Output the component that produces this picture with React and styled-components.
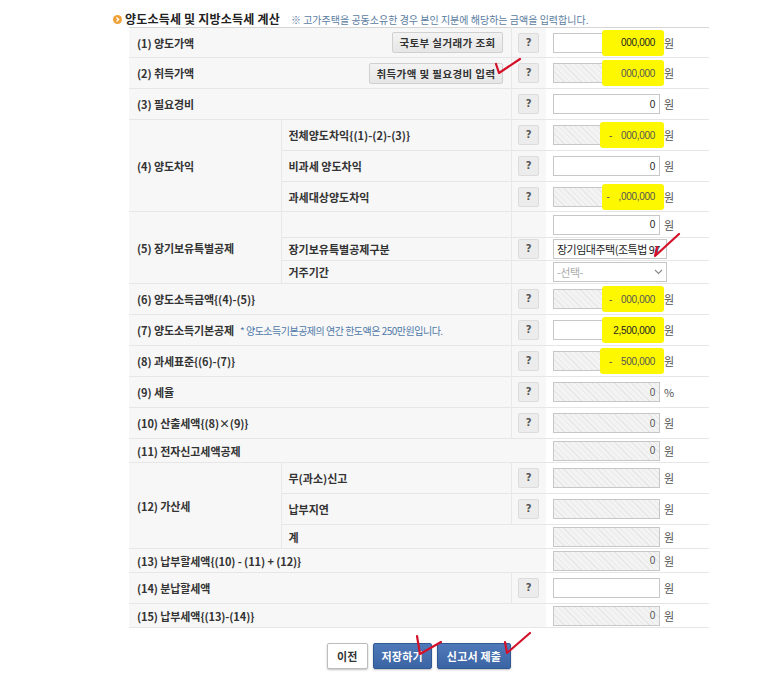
import styled, { createGlobalStyle, css } from "styled-components";

const GlobalStyle = createGlobalStyle`
  body {
    margin: 0;
    background: #fff;
    font-family: "Noto Sans CJK KR", "Noto Sans", sans-serif;
    color: #333;
  }
`;

const Page = styled.div`
  position: relative;
  width: 773px;
  height: 676px;
  padding: 8px 0 0 113px;
  box-sizing: border-box;
`;

const Header = styled.div`
  display: flex;
  align-items: flex-end;
  height: 19px;
  gap: 11px;
`;

const Title = styled.h3`
  margin: 0;
  display: flex;
  align-items: center;
  gap: 3px;
  font-size: 12px;
  font-weight: 700;
  color: #222;
  letter-spacing: 0.2px;
  line-height: 16px;
`;

const Note = styled.span`
  font-size: 10px;
  color: #5a7ca0;
  letter-spacing: 0px;
  line-height: 14px;
`;

const Table = styled.table`
  width: 580px;
  margin-left: 16px;
  border-collapse: collapse;
  table-layout: fixed;
  border-top: 1px solid #d6d6d6;
  border-bottom: 1px solid #c9c9c9;
`;

const Row = styled.tr`
  height: ${(p) => p.$h || 31}px;
  border-bottom: 1px solid #e6e6e6;
`;

const cellBase = css`
  padding: 0;
  font-size: 11px;
  vertical-align: middle;
  text-align: left;
`;

const LabelCell = styled.th`
  ${cellBase};
  background: #f7f7f7;
  padding-left: 8px;
  font-weight: 700;
  color: #333;
  letter-spacing: -0.1px;
`;

const SubCell = styled.th`
  ${cellBase};
  background: #f7f7f7;
  padding-left: 7px;
  font-weight: 700;
  color: #333;
  border-left: 1px solid #e8e8e8;
`;

const HelpCell = styled.td`
  ${cellBase};
  background: #f7f7f7;
  text-align: center;
  border-left: 1px solid #e8e8e8;
`;

const InputCell = styled.td`
  ${cellBase};
  background: #fff;
  padding-left: 7px;
`;

const LabelFlex = styled.div`
  display: flex;
  align-items: center;
  justify-content: space-between;
  padding-right: 8px;
`;

const Hint = styled.span`
  margin-left: 6px;
  font-size: 10px;
  font-weight: 400;
  color: #4f79a8;
  letter-spacing: -0.5px;
`;

const GrayButton = styled.button`
  height: 21px;
  padding: 0 6px;
  border: 1px solid #d0d0d0;
  border-radius: 2px;
  background: linear-gradient(#f3f3f3, #e6e6e6);
  font-family: inherit;
  font-size: 10.5px;
  font-weight: 700;
  color: #333;
  letter-spacing: 0.4px;
`;

const HelpButton = styled.button`
  width: 21px;
  height: 20px;
  padding: 0;
  border: 1px solid #dcdcdc;
  border-radius: 2px;
  background: #ececec;
  font-family: "DejaVu Sans", sans-serif;
  font-size: 10px;
  font-weight: 700;
  color: #555;
  line-height: 18px;
`;

const FieldWrap = styled.div`
  display: flex;
  align-items: center;
  gap: 4px;
`;

const Field = styled.div`
  position: relative;
  width: 107px;
  height: 20px;
  box-sizing: border-box;
  border: 1px solid #c7c7c7;
  padding: 0 4px;
  display: flex;
  align-items: center;
  justify-content: flex-end;
  color: ${(p) => (p.$hatch ? "#555" : "#222")};
  background: ${(p) =>
    p.$hatch
      ? "repeating-linear-gradient(45deg, #f3f3f3 0 3px, #e7e7e7 3px 4px)"
      : "#fff"};
`;

const Highlight = styled.span`
  position: absolute;
  top: -4px;
  bottom: -4px;
  right: -5px;
  width: ${(p) => p.$w}px;
  background: #fdf700;
  border-radius: 3px;
`;

const Value = styled.span`
  position: relative;
  display: flex;
  align-items: center;
  font-family: "Liberation Sans", "Noto Sans", sans-serif;
  font-size: 10px;
  letter-spacing: -0.3px;
`;

const Minus = styled.span`
  margin-right: 9px;
`;

const Unit = styled.span`
  font-size: 11px;
  color: #555;
`;

const Select = styled.div`
  width: 114px;
  height: 20px;
  box-sizing: border-box;
  border: 1px solid #c7c7c7;
  background: #fff;
  display: flex;
  align-items: center;
  padding: 0 3px 0 3px;
  font-size: 11px;
  letter-spacing: -0.5px;
  color: ${(p) => (p.$placeholder ? "#aaa" : "#222")};
  white-space: nowrap;
  span {
    flex: 1;
  }
`;

const Footer = styled.div`
  width: 580px;
  margin: 15px 0 0 16px;
  display: flex;
  justify-content: center;
  gap: 5px;
`;

const ActionButton = styled.button`
  height: 26px;
  padding: 0 ${(p) => p.$pad || 8}px;
  border-radius: 2px;
  font-family: inherit;
  font-size: 11px;
  font-weight: 700;
  letter-spacing: 0.2px;
  box-shadow: 0 1px 2px rgba(0, 0, 0, 0.25);
  ${(p) =>
    p.$primary
      ? css`
          border: 1px solid #2f5894;
          background: linear-gradient(#4f79b9, #3b64a4);
          color: #fff;
        `
      : css`
          border: 1px solid #bdbdbd;
          background: #fff;
          color: #333;
        `}
`;

const Marks = styled.svg`
  position: absolute;
  left: 0;
  top: 0;
  pointer-events: none;
`;

function TitleIcon() {
  return (
    <svg width="9" height="9" viewBox="0 0 9 9">
      <circle cx="4.5" cy="4.5" r="4.5" fill="#f0a23a" />
      <path d="M3.5 2.6 L5.5 4.5 L3.5 6.4" stroke="#fff" strokeWidth="1.4" fill="none" />
    </svg>
  );
}

function Chevron() {
  return (
    <svg width="9" height="6" viewBox="0 0 9 6">
      <path d="M1 1 L4.5 4.5 L8 1" stroke="#888" strokeWidth="1.1" fill="none" />
    </svg>
  );
}

function Amount({ hatch, value, minus, hl, unit = "원" }) {
  return (
    <FieldWrap>
      <Field $hatch={hatch}>
        {hl && <Highlight $w={hl} />}
        <Value>
          {minus && <Minus>-</Minus>}
          {value}
        </Value>
      </Field>
      <Unit>{unit}</Unit>
    </FieldWrap>
  );
}

const Help = () => (
  <HelpCell>
    <HelpButton>?</HelpButton>
  </HelpCell>
);

export default function App() {
  return (
    <Page>
      <GlobalStyle />
      <Header>
        <Title>
          <TitleIcon />
          양도소득세 및 지방소득세 계산
        </Title>
        <Note>※ 고가주택을 공동소유한 경우 본인 지분에 해당하는 금액을 입력합니다.</Note>
      </Header>

      <Table>
        <colgroup>
          <col style={{ width: 152 }} />
          <col style={{ width: 230 }} />
          <col style={{ width: 35 }} />
          <col style={{ width: 163 }} />
        </colgroup>
        <tbody>
          <Row $h={30}>
            <LabelCell colSpan={2}>
              <LabelFlex>
                (1) 양도가액
                <GrayButton>국토부 실거래가 조회</GrayButton>
              </LabelFlex>
            </LabelCell>
            <Help />
            <InputCell>
              <Amount value="000,000" hl={62} />
            </InputCell>
          </Row>
          <Row>
            <LabelCell colSpan={2}>
              <LabelFlex>
                (2) 취득가액
                <GrayButton>취득가액 및 필요경비 입력</GrayButton>
              </LabelFlex>
            </LabelCell>
            <Help />
            <InputCell>
              <Amount hatch value="000,000" hl={62} />
            </InputCell>
          </Row>
          <Row>
            <LabelCell colSpan={2}>(3) 필요경비</LabelCell>
            <Help />
            <InputCell>
              <Amount value="0" />
            </InputCell>
          </Row>

          <Row>
            <LabelCell rowSpan={3}>(4) 양도차익</LabelCell>
            <SubCell>전체양도차익{"{(1)-(2)-(3)}"}</SubCell>
            <Help />
            <InputCell>
              <Amount hatch minus value="000,000" hl={64} />
            </InputCell>
          </Row>
          <Row>
            <SubCell>비과세 양도차익</SubCell>
            <Help />
            <InputCell>
              <Amount value="0" />
            </InputCell>
          </Row>
          <Row $h={30}>
            <SubCell>과세대상양도차익</SubCell>
            <Help />
            <InputCell>
              <Amount hatch minus value=",000,000" hl={62} />
            </InputCell>
          </Row>

          <Row $h={26}>
            <LabelCell rowSpan={3}>(5) 장기보유특별공제</LabelCell>
            <SubCell />
            <HelpCell />
            <InputCell>
              <Amount value="0" />
            </InputCell>
          </Row>
          <Row $h={23}>
            <SubCell>장기보유특별공제구분</SubCell>
            <Help />
            <InputCell>
              <Select>
                <span>장기임대주택(조특법 97</span>
              </Select>
            </InputCell>
          </Row>
          <Row $h={23}>
            <SubCell>거주기간</SubCell>
            <HelpCell />
            <InputCell>
              <Select $placeholder>
                <span>-선택-</span>
                <Chevron />
              </Select>
            </InputCell>
          </Row>

          <Row>
            <LabelCell colSpan={2}>(6) 양도소득금액{"{(4)-(5)}"}</LabelCell>
            <Help />
            <InputCell>
              <Amount hatch minus value="000,000" hl={62} />
            </InputCell>
          </Row>
          <Row>
            <LabelCell colSpan={2}>
              (7) 양도소득기본공제
              <Hint>* 양도소득기본공제의 연간 한도액은 250만원입니다.</Hint>
            </LabelCell>
            <Help />
            <InputCell>
              <Amount value="2,500,000" hl={62} />
            </InputCell>
          </Row>
          <Row>
            <LabelCell colSpan={2}>(8) 과세표준{"{(6)-(7)}"}</LabelCell>
            <Help />
            <InputCell>
              <Amount hatch minus value="500,000" hl={64} />
            </InputCell>
          </Row>
          <Row>
            <LabelCell colSpan={2}>(9) 세율</LabelCell>
            <Help />
            <InputCell>
              <Amount hatch value="0" unit="%" />
            </InputCell>
          </Row>
          <Row>
            <LabelCell colSpan={2}>(10) 산출세액{"{(8)×(9)}"}</LabelCell>
            <Help />
            <InputCell>
              <Amount hatch value="0" />
            </InputCell>
          </Row>
          <Row $h={24}>
            <LabelCell colSpan={3}>(11) 전자신고세액공제</LabelCell>
            <InputCell>
              <Amount hatch value="0" />
            </InputCell>
          </Row>

          <Row>
            <LabelCell rowSpan={3}>(12) 가산세</LabelCell>
            <SubCell>무(과소)신고</SubCell>
            <Help />
            <InputCell>
              <Amount hatch value="" />
            </InputCell>
          </Row>
          <Row>
            <SubCell>납부지연</SubCell>
            <Help />
            <InputCell>
              <Amount hatch value="" />
            </InputCell>
          </Row>
          <Row $h={24}>
            <SubCell colSpan={2}>계</SubCell>
            <InputCell>
              <Amount hatch value="" />
            </InputCell>
          </Row>

          <Row $h={24}>
            <LabelCell colSpan={3}>(13) 납부할세액{"{(10) - (11) + (12)}"}</LabelCell>
            <InputCell>
              <Amount hatch value="0" />
            </InputCell>
          </Row>
          <Row>
            <LabelCell colSpan={2}>(14) 분납할세액</LabelCell>
            <Help />
            <InputCell>
              <Amount value="" />
            </InputCell>
          </Row>
          <Row $h={24}>
            <LabelCell colSpan={3}>(15) 납부세액{"{(13)-(14)}"}</LabelCell>
            <InputCell>
              <Amount hatch value="0" />
            </InputCell>
          </Row>
        </tbody>
      </Table>

      <Footer>
        <ActionButton $pad={9}>이전</ActionButton>
        <ActionButton $primary $pad={8}>저장하기</ActionButton>
        <ActionButton $primary $pad={9}>신고서 제출</ActionButton>
      </Footer>

      <Marks width="773" height="676" viewBox="0 0 773 676">
        <g stroke="#d3122a" strokeWidth="2.2" fill="none" strokeLinecap="round" strokeLinejoin="round">
          <polyline points="496,64 499,73 520,59" />
          <polyline points="657,247 655,256 679,234" />
          <polyline points="417,636 420,654 441,642" />
          <polyline points="505,642 507,653 530,633" />
        </g>
      </Marks>
    </Page>
  );
}
